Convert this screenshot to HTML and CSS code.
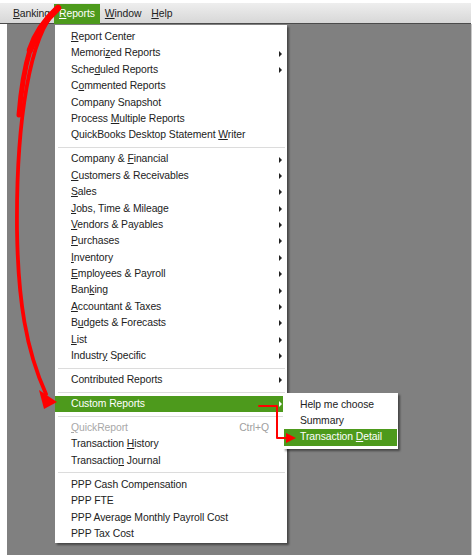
FILE: index.html
```html
<!DOCTYPE html>
<html>
<head>
<meta charset="utf-8">
<link rel="stylesheet" href="styles.css">
</head>
<body>
<div class="screen">
  <div class="menubar">
    <span class="mb-item"><u>B</u>anking</span>
    <span class="mb-item active"><u>R</u>eports</span>
    <span class="mb-item"><u>W</u>indow</span>
    <span class="mb-item"><u>H</u>elp</span>
  </div>
  <div class="desk">
    <div class="menu">
      <div class="row"><span><u>R</u>eport Center</span></div>
      <div class="row sub"><span>Memori<u>z</u>ed Reports</span><i class="tri"></i></div>
      <div class="row sub"><span>Sche<u>d</u>uled Reports</span><i class="tri"></i></div>
      <div class="row"><span>C<u>o</u>mmented Reports</span></div>
      <div class="row"><span>Company Snapshot</span></div>
      <div class="row"><span>Process <u>M</u>ultiple Reports</span></div>
      <div class="row"><span>QuickBooks Desktop Statement <u>W</u>riter</span></div>
      <div class="sep"></div>
      <div class="row sub"><span>Company &amp; <u>F</u>inancial</span><i class="tri"></i></div>
      <div class="row sub"><span><u>C</u>ustomers &amp; Receivables</span><i class="tri"></i></div>
      <div class="row sub"><span><u>S</u>ales</span><i class="tri"></i></div>
      <div class="row sub"><span><u>J</u>obs, Time &amp; Mileage</span><i class="tri"></i></div>
      <div class="row sub"><span><u>V</u>endors &amp; Payables</span><i class="tri"></i></div>
      <div class="row sub"><span><u>P</u>urchases</span><i class="tri"></i></div>
      <div class="row sub"><span><u>I</u>nventory</span><i class="tri"></i></div>
      <div class="row sub"><span><u>E</u>mployees &amp; Payroll</span><i class="tri"></i></div>
      <div class="row sub"><span>Ban<u>k</u>ing</span><i class="tri"></i></div>
      <div class="row sub"><span><u>A</u>ccountant &amp; Taxes</span><i class="tri"></i></div>
      <div class="row sub"><span>B<u>u</u>dgets &amp; Forecasts</span><i class="tri"></i></div>
      <div class="row sub"><span><u>L</u>ist</span><i class="tri"></i></div>
      <div class="row sub"><span>Industr<u>y</u> Specific</span><i class="tri"></i></div>
      <div class="sep"></div>
      <div class="row sub"><span>Contributed Reports</span><i class="tri"></i></div>
      <div class="sep"></div>
      <div class="row sub hl"><span>Custom Reports</span><i class="tri"></i></div>
      <div class="sep"></div>
      <div class="row disabled"><span><u>Q</u>uickReport</span><span class="key">Ctrl+Q</span></div>
      <div class="row"><span>Transaction <u>H</u>istory</span></div>
      <div class="row"><span>Transactio<u>n</u> Journal</span></div>
      <div class="sep"></div>
      <div class="row"><span>PPP Cash Compensation</span></div>
      <div class="row"><span>PPP FTE</span></div>
      <div class="row"><span>PPP Average Monthly Payroll Cost</span></div>
      <div class="row"><span>PPP Tax Cost</span></div>
    </div>
    <div class="submenu">
      <div class="row"><span>Help me choose</span></div>
      <div class="row"><span>Summary</span></div>
      <div class="row hl"><span>Transaction <u>D</u>etail</span></div>
    </div>
  </div>
  <svg class="annot" width="476" height="558" viewBox="0 0 476 558">
    <g fill="none" stroke="#ff0000" stroke-linecap="round" stroke-linejoin="round">
      <path d="M57 9 C 30 35, 16 120, 17 230 C 18 300, 26 350, 46 394" stroke-width="3.8"/>
      <path d="M58 8 C 45 20, 36 32, 30 50" stroke-width="6.5"/>
      <path d="M30 50 C 24 70, 21 90, 19 115" stroke-width="5"/>
      <polyline points="259,406 277,406 277,438 288,438" stroke-width="2"/>
    </g>
    <g fill="#ff0000">
      <polygon points="39,390 57,402 44,409"/>
      <polygon points="286,433 296,438 286,443"/>
    </g>
  </svg>
</div>
</body>
</html>
```

FILE: styles.css
```css
* { box-sizing: border-box; }
html, body { margin: 0; padding: 0; background: #ffffff; }
body {
  font-family: "Liberation Sans", Arial, sans-serif;
  font-size: 10.4px;
  letter-spacing: -0.08px;
  color: #222222;
}
.screen {
  position: relative;
  width: 476px;
  height: 558px;
  padding-top: 3px;
}
.menubar {
  width: 471px;
  height: 21px;
  border-bottom: 1px solid #4b4b4b;
  background: linear-gradient(#eeeeee, #d7d7d7);
  display: flex;
  align-items: flex-start;
  padding-left: 8px;
}
.mb-item {
  height: 20px;
  line-height: 21px;
  padding: 0 5px;
  color: #222;
}
.mb-item.active {
  height: 22px;
  margin-top: 1px;
  line-height: 19px;
  background: #4d9a1c;
  color: #ffffff;
  position: relative;
}
.mb-item:first-child { padding-right: 4px; }
.desk {
  position: relative;
  margin-left: 7px;
  width: 465px;
  height: 531px;
  background: #808080;
  border-right: 1px solid #c8c8c8;
}
.menu {
  position: absolute;
  left: 48px;
  top: 1px;
  width: 232px;
  background: #ffffff;
  padding: 4px 0 1px 0;
  box-shadow: 2px 2px 2px rgba(0, 0, 0, 0.45);
}
.row {
  height: 16.4px;
  line-height: 16.4px;
  padding-left: 16px;
  padding-right: 5px;
  display: flex;
  align-items: center;
  justify-content: space-between;
  white-space: nowrap;
}
.row span { line-height: 16.4px; }
.tri {
  display: block;
  width: 0;
  height: 0;
  border-left: 3px solid #222;
  border-top: 3px solid transparent;
  border-bottom: 3px solid transparent;
}
.row.hl {
  background: #4d9a1c;
  color: #ffffff;
}
.row.hl .tri { border-left-color: #ffffff; }
.row.disabled { color: #a8a8a8; }
.key { color: #a0a0a0; margin-right: 13px; }
.sep {
  height: 1px;
  background: #dcdcdc;
  margin: 3.3px 2px 3.3px 3px;
}
.submenu {
  position: absolute;
  left: 276px;
  top: 369px;
  width: 115px;
  background: #ffffff;
  padding: 3.5px 1px 3px 1px;
  box-shadow: 2px 2px 2px rgba(0, 0, 0, 0.45);
}
.submenu .row { padding-left: 16px; }
.annot {
  position: absolute;
  left: 0;
  top: 0;
  pointer-events: none;
}
```
